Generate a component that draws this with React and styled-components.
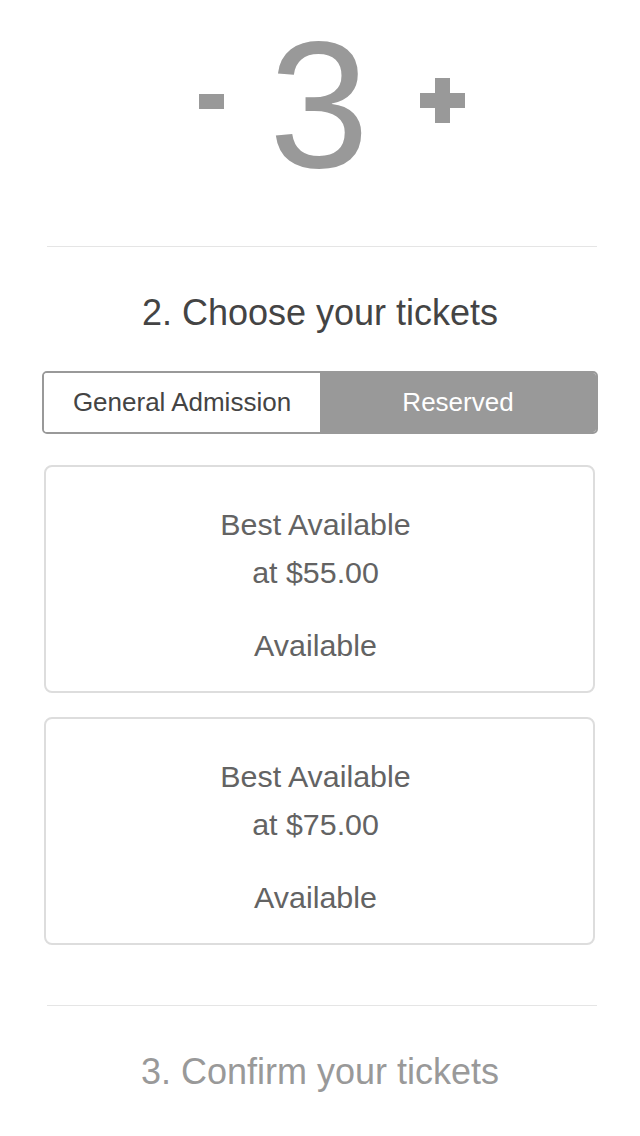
import { createGlobalStyle } from "styled-components";
import styled from "styled-components";

const Global = createGlobalStyle`
  html, body {
    margin: 0;
    padding: 0;
    background: #fff;
  }
  body {
    font-family: "Liberation Sans", Arial, Helvetica, sans-serif;
    -webkit-font-smoothing: antialiased;
  }
`;

const Page = styled.div`
  padding: 0 42px;
`;

const Counter = styled.div`
  display: flex;
  justify-content: center;
  height: 210px;
  padding-left: 24px;
`;

const StepButton = styled.button`
  align-self: flex-start;
  margin-top: ${(p) => p.$top}px;
  padding: 0;
  border: 0;
  background: none;
  cursor: pointer;
  display: block;
  line-height: 0;
`;

const Count = styled.div`
  font-size: 180px;
  line-height: 210px;
  color: #999;
  margin: 0 51px 0 45px;
`;

const Divider = styled.hr`
  border: 0;
  border-top: 1px solid #e5e5e5;
  margin: ${(p) => p.$top || 0}px 1px 0 5px;
`;

const Heading = styled.h2`
  margin: 45px 0 0;
  font-size: 36px;
  font-weight: normal;
  line-height: 41px;
  text-align: center;
  color: ${(p) => (p.$muted ? "#999" : "#444")};
`;

const Segmented = styled.div`
  display: flex;
  margin-top: 38px;
  height: 63px;
  box-sizing: border-box;
  border: 2px solid #999;
  border-radius: 5px;
  overflow: hidden;
`;

const Segment = styled.button`
  flex: 1;
  border: 0;
  margin: 0;
  padding: 0;
  font-family: inherit;
  font-size: 26px;
  background: ${(p) => (p.$active ? "#999" : "#fff")};
  color: ${(p) => (p.$active ? "#fff" : "#444")};
  cursor: pointer;
`;

const Cards = styled.div`
  display: flex;
  flex-direction: column;
  gap: 24px;
  margin: 31px 3px 0 2px;
`;

const Card = styled.div`
  box-sizing: border-box;
  height: 228px;
  border: 2px solid #ddd;
  border-radius: 8px;
  padding: 33px 8px 0 0;
  text-align: center;
  color: #636363;
  font-size: 30.4px;
  line-height: 48px;
`;

const Status = styled.div`
  margin-top: 25px;
`;

const Minus = () => (
  <svg width="25" height="15" viewBox="0 0 25 15">
    <rect width="25" height="15" fill="#999" />
  </svg>
);

const Plus = () => (
  <svg width="45" height="45" viewBox="0 0 45 45">
    <rect x="0" y="15" width="45" height="15" fill="#999" />
    <rect x="15" y="0" width="15" height="45" fill="#999" />
  </svg>
);

const tickets = [
  { name: "Best Available", price: "$55.00", status: "Available" },
  { name: "Best Available", price: "$75.00", status: "Available" },
];

export default function App() {
  return (
    <>
      <Global />
      <Page>
        <Counter>
          <StepButton $top={94} aria-label="decrease">
            <Minus />
          </StepButton>
          <Count>3</Count>
          <StepButton $top={78} aria-label="increase">
            <Plus />
          </StepButton>
        </Counter>
        <Divider $top={36} />
        <Heading>2. Choose your tickets</Heading>
        <Segmented>
          <Segment>General Admission</Segment>
          <Segment $active>Reserved</Segment>
        </Segmented>
        <Cards>
          {tickets.map((t, i) => (
            <Card key={i}>
              <div>{t.name}</div>
              <div>at {t.price}</div>
              <Status>{t.status}</Status>
            </Card>
          ))}
        </Cards>
        <Divider $top={60} />
        <Heading $muted>3. Confirm your tickets</Heading>
      </Page>
    </>
  );
}
